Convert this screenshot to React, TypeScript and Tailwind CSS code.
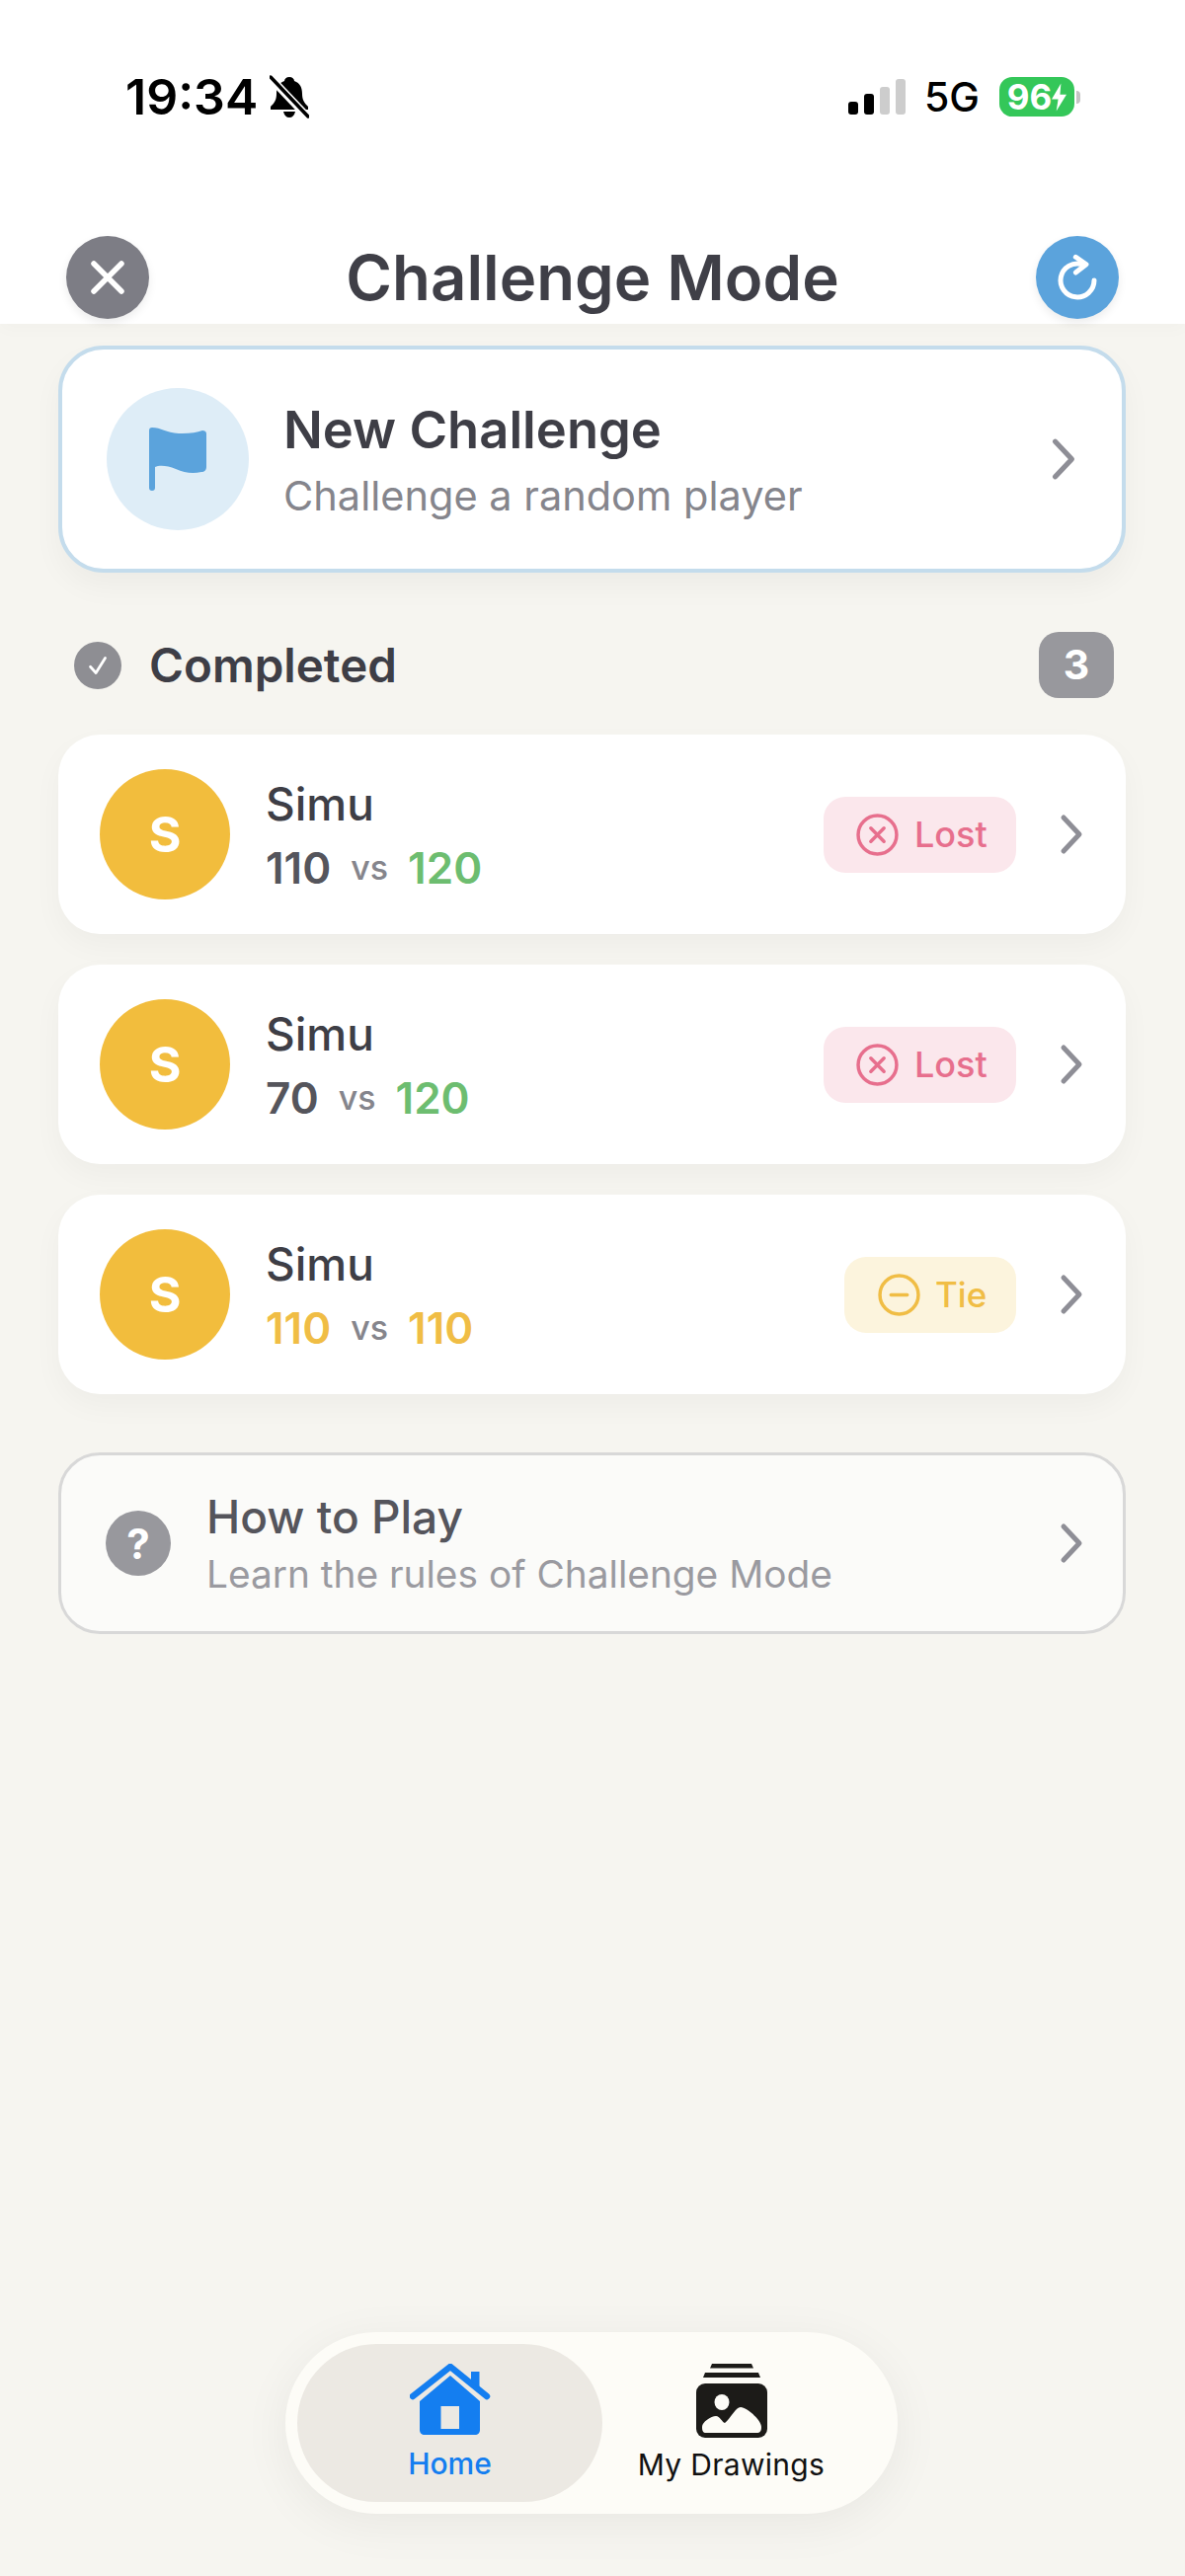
import React from "react";

const Chevron = ({ className = "" }: { className?: string }) => (
  <svg viewBox="0 0 24 42" className={className} fill="none" stroke="#8e8e96" strokeWidth="5" strokeLinecap="round" strokeLinejoin="round">
    <path d="M4 4 L20 21 L4 38" />
  </svg>
);

const LostBadge = () => (
  <div className="flex h-[77px] w-[195px] items-center gap-[16px] rounded-[22px] bg-[#fbe7ec] pl-[33px]">
    <svg viewBox="0 0 42 42" className="h-[43px] w-[43px]" fill="none" stroke="#e76f8d" strokeWidth="3.4" strokeLinecap="round">
      <circle cx="21" cy="21" r="19" />
      <path d="M14.5 14.5 L27.5 27.5 M27.5 14.5 L14.5 27.5" />
    </svg>
    <span className="text-[36px] font-medium text-[#e76f8d]">Lost</span>
  </div>
);

const TieBadge = () => (
  <div className="flex h-[77px] w-[174px] items-center gap-[15px] rounded-[22px] bg-[#fcf4dd] pl-[34px]">
    <svg viewBox="0 0 42 42" className="h-[43px] w-[43px]" fill="none" stroke="#f0bd45" strokeWidth="3.4" strokeLinecap="round">
      <circle cx="21" cy="21" r="19" />
      <path d="M13 21 L29 21" />
    </svg>
    <span className="text-[35px] font-medium text-[#f0bd45]">Tie</span>
  </div>
);

const Row = ({ a, b, aColor, bColor, result }: { a: string; b: string; aColor: string; bColor: string; result: "lost" | "tie" }) => (
  <div className="flex h-[202px] items-center rounded-[42px] bg-white pl-[42px] pr-[43px] shadow-[0_12px_30px_rgba(0,0,0,0.035)]">
    <div className="flex h-[132px] w-[132px] shrink-0 items-center justify-center rounded-full bg-[#f2bd3d] text-[50px] font-bold text-white">S</div>
    <div className="ml-[36px] flex flex-col">
      <span className="text-[46px] leading-[56px] font-medium text-[#3e3e46]">Simu</span>
      <div className="mt-[11px] flex items-center text-[44px] leading-[52px] font-semibold">
        <span className={aColor}>{a}</span>
        <span className="mx-[20px] text-[34px] font-medium text-[#85858c]">vs</span>
        <span className={bColor}>{b}</span>
      </div>
    </div>
    <div className="ml-auto flex items-center">
      {result === "lost" ? <LostBadge /> : <TieBadge />}
      <Chevron className="ml-[44px] h-[42px] w-[24px]" />
    </div>
  </div>
);

export default function App() {
  return (
    <div className="flex h-[2609px] w-[1200px] flex-col overflow-hidden bg-[#f6f5f0] font-['Inter',sans-serif]">
      <header className="relative h-[328px] shrink-0 bg-white px-[67px] shadow-[0_6px_16px_rgba(0,0,0,0.02)]">
        <div className="box-content flex h-[72px] items-center justify-between pl-[60px] pr-[39px] pt-[62px]">
          <div className="flex items-center gap-[12px]">
            <span className="text-[50px] leading-none font-semibold text-black">19:34</span>
            <svg viewBox="0 0 40 44" className="h-[44px] w-[40px]" fill="#000">
              <path d="M20 2 c-3 0 -5 2 -5 4 c-6 2 -8 7 -8 13 c0 6 -2 9 -6 13 l0 3 l38 0 l0 -3 c-4 -4 -6 -7 -6 -13 c0 -6 -2 -11 -8 -13 c0 -2 -2 -4 -5 -4z" />
              <path d="M14 37 c1 4 3 6 6 6 c3 0 5 -2 6 -6z" />
              <path d="M1 3 L38 42" stroke="#fff" strokeWidth="8" />
              <path d="M1 2 L39 42" stroke="#000" strokeWidth="3.5" strokeLinecap="round" />
            </svg>
          </div>
          <div className="flex items-center">
            <div className="flex items-end gap-[6px]">
              <div className="h-[13px] w-[10px] rounded-[3px] bg-black" />
              <div className="h-[21px] w-[10px] rounded-[3px] bg-black" />
              <div className="h-[28px] w-[10px] rounded-[3px] bg-[#cdcdcd]" />
              <div className="h-[36px] w-[10px] rounded-[3px] bg-[#cdcdcd]" />
            </div>
            <span className="ml-[19px] text-[41px] leading-none font-medium text-black">5G</span>
            <div className="ml-[20px] flex h-[40px] w-[76px] items-center justify-center rounded-[13px] bg-[#34c759] text-[35px] leading-none font-bold text-white">
              96
              <svg viewBox="0 0 16 30" className="h-[29px] w-[15px]" fill="#fff">
                <path d="M10 0 L0 17 L7 17 L5 30 L16 12 L9 12z" />
              </svg>
            </div>
            <div className="ml-[2px] h-[13px] w-[4px] rounded-r-full bg-[#c4c4c4]" />
          </div>
        </div>
        <div className="mt-[105px] flex h-[84px] items-center justify-between">
          <button className="flex h-[84px] w-[84px] items-center justify-center rounded-full bg-[#7d7d85] shadow-[0_4px_10px_rgba(0,0,0,0.08)]">
            <svg viewBox="0 0 36 36" className="h-[36px] w-[36px]" fill="none" stroke="#fff" strokeWidth="5.5" strokeLinecap="round">
              <path d="M4 4 L32 32 M32 4 L4 32" />
            </svg>
          </button>
          <h1 className="text-[63.5px] leading-none font-semibold text-[#3f3f47]">Challenge Mode</h1>
          <button className="flex h-[84px] w-[84px] items-center justify-center rounded-full bg-[#5ba3dc] shadow-[0_4px_10px_rgba(0,0,0,0.08)]">
            <svg viewBox="0 0 84 84" className="h-[84px] w-[84px]" fill="none" stroke="#fff" strokeWidth="5" strokeLinecap="round" strokeLinejoin="round">
              <path d="M47 28.7 A17 17 0 1 0 59 45" />
              <path d="M40.3 21.3 L51 28.7 L40.3 37" />
            </svg>
          </button>
        </div>
      </header>

      <main className="flex flex-col pl-[59px] pr-[60px] pt-[22px]">
        <div className="flex h-[230px] items-center rounded-[46px] border-[4px] border-[#c4dcec] bg-white pl-[45px] pr-[46px] shadow-[0_14px_30px_rgba(0,0,0,0.04)]">
          <div className="flex h-[144px] w-[144px] shrink-0 items-center justify-center rounded-full bg-[#deedf7]">
            <svg viewBox="0 0 58 64" className="h-[64px] w-[58px]" fill="#5ba3dc">
              <path d="M0 3 C0 1 1 0 3 0 C12 0 17 5 30 6 C40 6.5 48 5 54 3 C56 3 58 4 58 6 L58 40 C58 43 56 45 53 45 C44 47 36 46 27 42 C18 38 10 38 6 40 L6 61 C6 63 5 64 3 64 C1 64 0 63 0 61z" />
            </svg>
          </div>
          <div className="ml-[35px] flex flex-col">
            <span className="text-[52.5px] leading-[62px] font-semibold text-[#3e3e46]">New Challenge</span>
            <span className="mt-[11px] text-[41.5px] leading-[50px] text-[#85858c]">Challenge a random player</span>
          </div>
          <Chevron className="ml-auto h-[44px] w-[26px]" />
        </div>

        <div className="mt-[60px] flex h-[67px] items-center pl-[16px] pr-[12px]">
          <div className="flex h-[48px] w-[48px] items-center justify-center rounded-full bg-[#8e8e93]">
            <svg viewBox="0 0 24 24" className="h-[30px] w-[30px]" fill="none" stroke="#fff" strokeWidth="2.2" strokeLinecap="round" strokeLinejoin="round">
              <path d="M6 13 L10.5 18 L18 6" />
            </svg>
          </div>
          <span className="ml-[28px] text-[47.5px] leading-none font-semibold text-[#3e3e46]">Completed</span>
          <div className="ml-auto flex h-[67px] w-[76px] items-center justify-center rounded-[20px] bg-[#98989d] text-[41px] font-bold text-white">3</div>
        </div>

        <div className="mt-[37px] flex flex-col gap-[31px]">
          <Row a="110" b="120" aColor="text-[#55555c]" bColor="text-[#6dbd70]" result="lost" />
          <Row a="70" b="120" aColor="text-[#55555c]" bColor="text-[#6dbd70]" result="lost" />
          <Row a="110" b="110" aColor="text-[#f0bd45]" bColor="text-[#f0bd45]" result="tie" />
        </div>

        <div className="mt-[59px] flex h-[184px] items-center rounded-[42px] border-[3px] border-[#d8d8d8] bg-[#fbfbf9] pl-[45px] pr-[40px]">
          <div className="flex h-[66px] w-[66px] shrink-0 items-center justify-center rounded-full bg-[#98989d] text-[42px] font-bold text-white">?</div>
          <div className="ml-[36px] flex flex-col">
            <span className="text-[46px] leading-[54px] font-medium text-[#55555c]">How to Play</span>
            <span className="mt-[8px] text-[38.8px] leading-[46px] text-[#9a9aa0]">Learn the rules of Challenge Mode</span>
          </div>
          <Chevron className="ml-auto h-[42px] w-[24px]" />
        </div>
      </main>

      <nav className="mb-[63px] ml-[289px] mt-auto flex h-[184px] w-[620px] items-center rounded-[92px] bg-[#fdfcf7] pl-[12px] pr-[38px] shadow-[0_10px_50px_rgba(0,0,0,0.06)]">
        <div className="flex h-[160px] w-[309px] flex-col items-center justify-center rounded-[80px] bg-[#ece9e3]">
          <svg viewBox="0 0 82 74" className="h-[74px] w-[82px]" fill="#147ef0">
            <path d="M10 38 L41 12 L71 38 L71 67 C71 70 69 72 66 72 L15 72 C12 72 10 70 10 67z M31.5 43 L31.5 66 L50 66 L50 43z" fillRule="evenodd" />
            <path d="M3 33 L41 3 L78 33" fill="none" stroke="#147ef0" strokeWidth="6.5" strokeLinecap="round" strokeLinejoin="round" />
            <path d="M62 8 L70.5 8 L70.5 25 L62 18z" />
          </svg>
          <span className="mt-[8px] text-[30px] leading-[38px] font-medium text-[#147ef0]">Home</span>
        </div>
        <div className="flex h-[160px] flex-1 flex-col items-center justify-center">
          <svg viewBox="0 0 72 76" className="h-[76px] w-[72px]">
            <path d="M16 1 L56 1 L58 5.5 L14 5.5z" fill="#1c1b18" />
            <path d="M9 10 L63 10 L65 15 L7 15z" fill="#1c1b18" />
            <rect x="0" y="21" width="72" height="55" rx="9" fill="#1c1b18" />
            <ellipse cx="26" cy="40" rx="7.5" ry="8" fill="#fdfcf7" />
            <path d="M6 65 C6 60 15 54 20 54 C24 54 26 60 29 61 C35 56 40 45 45 45 C51 45 66 58 66 65 C66 69 65 71 61 71 L10 71 C7 71 6 69 6 65z" fill="#fdfcf7" />
          </svg>
          <span className="mt-[8px] text-[30px] leading-[38px] font-normal tracking-[0.3px] text-[#111]">My Drawings</span>
        </div>
      </nav>
    </div>
  );
}
